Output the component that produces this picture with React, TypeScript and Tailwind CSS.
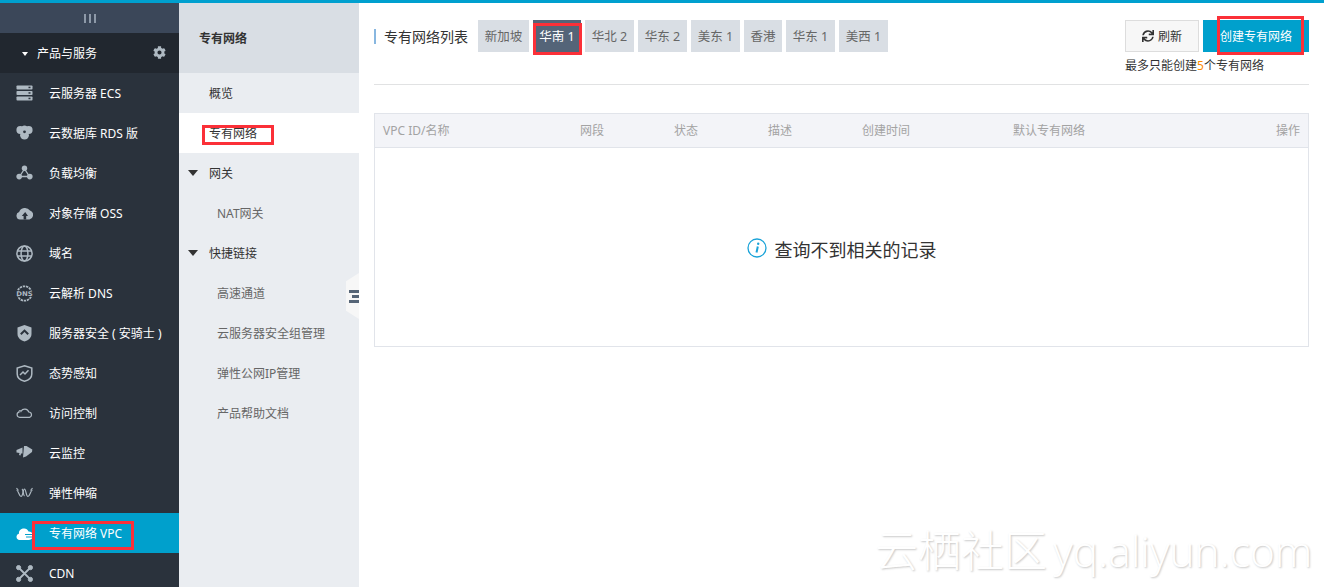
import React from "react";
import { FaCog, FaSync } from "react-icons/fa";

const C = "#aeb9c2";
const D = "#2a323c";
const ic = (children: React.ReactNode) => (
  <svg width="17" height="17" viewBox="0 0 17 17" fill={C} className="block">{children}</svg>
);
const line = (children: React.ReactNode, w = 1.2) => (
  <svg width="17" height="17" viewBox="0 0 17 17" fill="none" stroke={C} strokeWidth={w} className="block">{children}</svg>
);
const icons: Record<string, React.ReactNode> = {
  ecs: ic(<><rect x="0.5" y="0.5" width="16" height="4" rx="0.8"/><rect x="0.5" y="6" width="16" height="4" rx="0.8"/><rect x="0.5" y="11.5" width="16" height="4" rx="0.8"/><rect x="12.5" y="1.7" width="2" height="1.5" fill={D}/><rect x="12.5" y="7.2" width="2" height="1.5" fill={D}/><rect x="12.5" y="12.7" width="2" height="1.5" fill={D}/></>),
  rds: ic(<><circle cx="4.3" cy="5" r="3.9"/><circle cx="12.7" cy="5" r="3.9"/><circle cx="8.5" cy="3.5" r="3"/><circle cx="8.5" cy="10.2" r="4.4"/><circle cx="8.5" cy="6.8" r="1.4" fill={D}/></>),
  slb: ic(<><circle cx="8.5" cy="3.2" r="2.7"/><circle cx="3.2" cy="11.6" r="2.8"/><circle cx="13.8" cy="11.6" r="2.8"/><path d="M8.5 4 L3.5 11.5 H13.5 Z" stroke={C} strokeWidth="1.3" fill="none"/></>),
  oss: ic(<><path d="M4 14.5 a3.8 3.8 0 0 1 -.9 -7.4 A6.2 6.2 0 0 1 14 5.5 a4.7 4.7 0 0 1 -.5 9 Z"/><path d="M9.2 7 L5.8 11 H7.6 V14.5 H10.2 V11 H12 Z" fill={D}/></>),
  dom: line(<><circle cx="8.5" cy="8.5" r="7.6"/><ellipse cx="8.5" cy="8.5" rx="3.4" ry="7.6"/><path d="M1 6H16M1 11H16"/></>, 1.5),
  dns: <svg width="17" height="17" viewBox="0 0 17 17" className="block"><circle cx="8.5" cy="8.5" r="7.2" fill="none" stroke={C} strokeWidth="1.8" strokeDasharray="2.4 0.8"/><rect x="0" y="5.5" width="17" height="6" fill={D}/><text x="8.5" y="11" textAnchor="middle" fontSize="6.5" fontWeight="700" fill={C} fontFamily="'DejaVu Sans',sans-serif" textLength="16.5" lengthAdjust="spacingAndGlyphs">DNS</text></svg>,
  sec: ic(<><path d="M8.5 0 L15.5 2.5 V9 C15.5 13 12 15.5 8.5 16.5 C5 15.5 1.5 13 1.5 9 V2.5 Z"/><path d="M4.8 9.3 L8.5 5.6 L12.2 9.3" fill="none" stroke={D} strokeWidth="2"/></>),
  sit: line(<><path d="M8.5 .8 L15.8 3 V9 C15.8 13 12 15.4 8.5 16.2 C5 15.4 1.2 13 1.2 9 V3 Z"/><path d="M4 10 L7 7 L9 9 L12.5 5.2"/></>, 1.5),
  ram: line(<path d="M3.6 12.3 a2.6 2.6 0 0 1 -.6 -5.1 A1 1 0 0 1 5 6.3 A4.3 4.3 0 0 1 12.8 7 a2.7 2.7 0 0 1 .7 5.3 Z"/>),
  mon: ic(<><path d="M0.5 5 L6.5 2.5 V8.5 L5 8.5 L4.5 10.5 L3 10 L3.5 8 L0.5 7.5 Z"/><path d="M8 1 L10.5 1 L16.3 4.5 L16 7 L10 11.5 L7 12.5 Z"/></>),
  ess: line(<><path d="M0.5 5 C2.5 5 3 11.5 5 11.5 C7 11.5 7 4 8.5 4 C10 4 10 11.5 12 11.5 C14 11.5 14.5 5 16.5 5"/><path d="M0.5 3 L2.5 5.5 M16.5 3 L14.5 5.5 M6 4 C7.5 5 7 10 8.5 11"/></>),
  vpc: <svg width="17" height="17" viewBox="0 0 17 17" fill="#fff" className="block"><path d="M3.5 15 a3.2 3.2 0 0 1 -.6 -6.3 A5 5 0 0 1 12.5 6.5 a4 4 0 0 1 .5 8.5 Z"/><path d="M9 9.5 H17 M10 12 H17" stroke="#00a0cc" strokeWidth="1.1"/></svg>,
  cdn: <svg width="17" height="17" viewBox="0 0 17 17" fill={C} stroke={C} className="block"><path d="M3 3 L14 14 M14 3 L3 14" strokeWidth="1.8"/><circle cx="2.6" cy="2.6" r="2.1"/><circle cx="14.4" cy="2.6" r="2.1"/><circle cx="2.6" cy="14.4" r="2.1"/><circle cx="14.4" cy="14.4" r="2.1"/></svg>,
};

const items: [string, string][] = [
  ["ecs", "云服务器 ECS"], ["rds", "云数据库 RDS 版"], ["slb", "负载均衡"], ["oss", "对象存储 OSS"], ["dom", "域名"],
  ["dns", "云解析 DNS"], ["sec", "服务器安全 ( 安骑士 )"], ["sit", "态势感知"], ["ram", "访问控制"], ["mon", "云监控"],
  ["ess", "弹性伸缩"], ["vpc", "专有网络 VPC"], ["cdn", "CDN"],
];
const tabs = ["新加坡", "华南 1", "华北 2", "华东 2", "美东 1", "香港", "华东 1", "美西 1"];
const tabW = ["w-[51px]", "w-[48px]", "w-[49px]", "w-[49px]", "w-[49px]", "w-[38px]", "w-[49px]", "w-[49px]"];

const Red = ({ className }: { className: string }) => (
  <div className={"absolute border-[3px] border-[#fb3038] pointer-events-none " + className} />
);

export default function App() {
  return (
    <div className="relative w-[1324px] h-[587px] overflow-hidden bg-white font-['Noto_Sans','Noto_Sans_CJK_SC',sans-serif] text-[12px]">
      <div className="h-[3px] bg-[#00a0cf]" />
      <div className="flex h-[584px]">
        {/* Sidebar */}
        <aside className="w-[179px] shrink-0 bg-[#2a323c] text-white overflow-hidden">
          <div className="h-[30px] bg-[#3b4759] flex items-center justify-center gap-[3px]">
            <span className="w-[2px] h-[9px] bg-[#8d99a8]" />
            <span className="w-[2px] h-[9px] bg-[#8d99a8]" />
            <span className="w-[2px] h-[9px] bg-[#8d99a8]" />
          </div>
          <div className="h-[40px] bg-[#21272f] flex items-center pl-[22px] pr-[13px] pt-[2px]">
            <span className="w-0 h-0 border-x-[3.5px] border-x-transparent border-t-[4px] border-t-white mr-[9px]" />
            <span className="flex-1">产品与服务</span>
            <FaCog size={13} color={C} className="mb-[3px]" />
          </div>
          {items.map(([k, t]) => (
            <div key={k} className={"h-[40px] flex items-center pl-[16px] " + (k === "vpc" ? "bg-[#00a0cc]" : "")}>
              <span className="w-[33px] shrink-0">{icons[k]}</span>
              <span className="whitespace-nowrap pt-[2px]">{t}</span>
            </div>
          ))}
        </aside>

        {/* Secondary nav */}
        <nav className="relative w-[180px] shrink-0 bg-[#eaedf1] text-[#333]">
          <div className="h-[70px] bg-[#d9dee4] flex items-center pl-[20px] pt-[2px] text-[#333] font-semibold">专有网络</div>
          <div className="h-[40px] flex items-center pl-[30px] pt-[2px]">概览</div>
          <div className="h-[40px] flex items-center pl-[30px] pt-[2px] bg-white">专有网络</div>
          <div className="h-[40px] flex items-center pl-[9px]">
            <span className="w-0 h-0 border-x-[5px] border-x-transparent border-t-[6px] border-t-[#333] mr-[11px]" /><span className="pt-[2px]">网关</span>
          </div>
          <div className="h-[40px] flex items-center pl-[38px] pt-[2px] text-[#666]">NAT网关</div>
          <div className="h-[40px] flex items-center pl-[9px]">
            <span className="w-0 h-0 border-x-[5px] border-x-transparent border-t-[6px] border-t-[#333] mr-[11px]" /><span className="pt-[2px]">快捷链接</span>
          </div>
          {["高速通道", "云服务器安全组管理", "弹性公网IP管理", "产品帮助文档"].map((t) => (
            <div key={t} className="h-[40px] flex items-center pl-[38px] pt-[2px] text-[#666]">{t}</div>
          ))}
          <div className="absolute right-0 top-[270px] w-[13px] h-[46px] bg-[#f7f7f7] [clip-path:polygon(100%_0,100%_100%,0_82%,0_18%)] flex flex-col justify-center items-end gap-[2px]">
            <span className="w-[10px] h-[3px] bg-[#566577]" />
            <span className="w-[7px] h-[3px] bg-[#566577]" />
            <span className="w-[10px] h-[3px] bg-[#566577]" />
          </div>
        </nav>

        {/* Main */}
        <main className="flex-1 pl-[15px] pr-[15px]">
          <div className="h-[82px] border-b border-[#e1e2e3] flex items-start pt-[17px]">
            <div className="flex items-center h-[32px]">
              <span className="w-[2px] h-[15px] bg-[#88b7e0] mr-[8px]" />
              <span className="text-[#333] text-[14px] mr-[10px] w-[84px] whitespace-nowrap">专有网络列表</span>
            </div>
            <div className="flex gap-[4px]">
              {tabs.map((t, i) => (
                <div key={t} className={"h-[32px] flex items-center justify-center pt-[3px] text-[12.5px] " + tabW[i] + " " + (i === 1 ? "bg-[#546478] text-white" : "bg-[#d9dee4] text-[#666]")}>{t}</div>
              ))}
            </div>
            <div className="ml-auto w-[184px]">
              <div className="flex gap-[4px]">
                <div className="w-[74px] h-[32px] bg-[#f7f7f7] border border-[#ddd] flex items-center justify-center gap-[4px] text-[#333]">
                  <FaSync size={12} /><span className="pt-[2px]">刷新</span>
                </div>
                <div className="w-[106px] h-[32px] bg-[#00a0cc] text-white flex items-center justify-center pt-[2px]">创建专有网络</div>
              </div>
              <div className="mt-[5px] text-[#333] whitespace-nowrap leading-[18px]">最多只能创建<span className="text-[#ff8a00]">5</span>个专有网络</div>
            </div>
          </div>

          <div className="mt-[28px] border border-[#e1e4ea] h-[234px]">
            <div className="h-[34px] bg-[#f3f4f8] border-b border-[#e1e4ea] flex items-center text-[#a3a3a3] relative pr-[8px]">
              <span className="pl-[8px] w-[205px]">VPC ID/名称</span>
              <span className="w-[94px]">网段</span>
              <span className="w-[94px]">状态</span>
              <span className="w-[94px]">描述</span>
              <span className="w-[151px]">创建时间</span>
              <span className="flex-1">默认专有网络</span>
              <span>操作</span>
            </div>
            <div className="h-[198px] flex items-center justify-center gap-[8px] pt-[6px]">
              <svg width="20" height="20" viewBox="0 0 20 20" className="block mb-[4px]" fill="none">
                <circle cx="10" cy="10" r="9" stroke="#1aa3d8" strokeWidth="1.3" />
                <path d="M10.8 8.5 L9.5 14.5" stroke="#1aa3d8" strokeWidth="2" />
                <circle cx="11.2" cy="5.8" r="1.2" fill="#1aa3d8" />
              </svg>
              <span className="text-[18px] text-[#333] leading-none">查询不到相关的记录</span>
            </div>
          </div>
        </main>
      </div>

      {/* Watermark */}
      <div className="absolute left-[875px] top-[528px] text-[24px] leading-[46px] font-light text-white whitespace-nowrap font-['Open_Sans','Noto_Sans_CJK_SC',sans-serif] [text-shadow:1px_1px_2px_rgba(0,0,0,0.22)]">
        <span className="text-[43px]">云栖社区</span> <span className="text-[42.5px]">yq.aliyun.com</span>
      </div>

      {/* Annotations */}
      <Red className="left-[32px] top-[521px] w-[102px] h-[29px]" />
      <Red className="left-[202px] top-[125px] w-[72px] h-[20px]" />
      <Red className="left-[533px] top-[23px] w-[49px] h-[32px]" />
      <Red className="left-[1217px] top-[16px] w-[87px] h-[39px]" />
    </div>
  );
}
